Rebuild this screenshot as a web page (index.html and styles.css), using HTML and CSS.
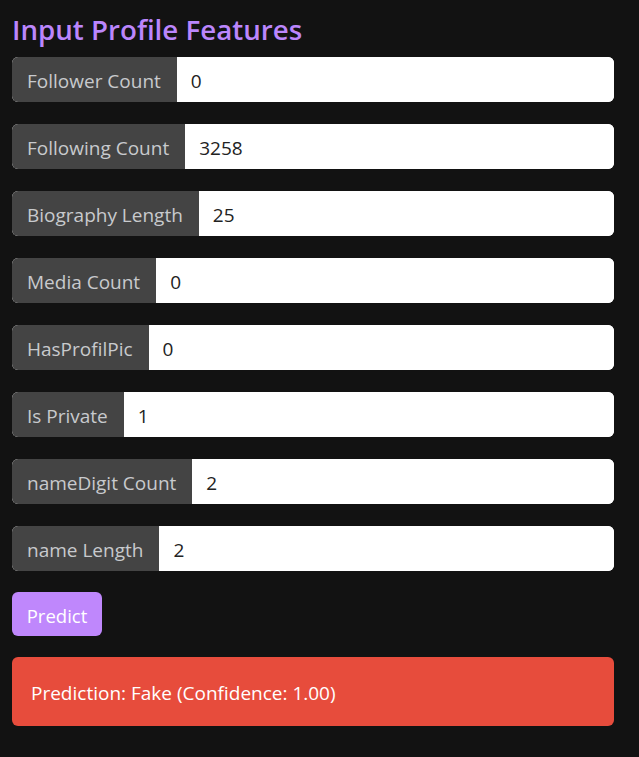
FILE: index.html
```html
<!DOCTYPE html>
<html>
<head>
<meta charset="utf-8">
<link rel="stylesheet" href="styles.css">
</head>
<body>
<div class="container">
  <h2 class="title">Input Profile Features</h2>
  <div class="group"><span class="label">Follower Count</span><input class="field" value="0"></div>
  <div class="group"><span class="label">Following Count</span><input class="field" value="3258"></div>
  <div class="group"><span class="label">Biography Length</span><input class="field" value="25"></div>
  <div class="group"><span class="label">Media Count</span><input class="field" value="0"></div>
  <div class="group"><span class="label">HasProfilPic</span><input class="field" value="0"></div>
  <div class="group"><span class="label">Is Private</span><input class="field" value="1"></div>
  <div class="group"><span class="label">nameDigit Count</span><input class="field" value="2"></div>
  <div class="group"><span class="label">name Length</span><input class="field" value="2"></div>
  <button class="btn">Predict</button>
  <div class="result">Prediction: Fake (Confidence: 1.00)</div>
</div>
</body>
</html>
```
FILE: styles.css
```css
html, body {
  margin: 0;
  background: #121212;
}
body {
  font-family: "Open Sans", "Noto Sans", sans-serif;
}
.container {
  padding: 12px 25px 12px 12px;
}
.title {
  margin: 0 0 11px;
  font-size: 27.7px;
  line-height: 34px;
  font-weight: 600;
  color: #bb86fc;
}
.group {
  display: flex;
  height: 45px;
  margin-bottom: 22px;
  border-radius: 6px;
  overflow: hidden;
  background: #fff;
}
.label {
  display: flex;
  align-items: center;
  padding: 2px 16px 0 15px;
  background: #444;
  color: #c8cacd;
  font-size: 19px;
  white-space: nowrap;
}
.field {
  flex: 1;
  min-width: 0;
  border: 0;
  outline: none;
  padding: 2px 14px 0;
  font-family: inherit;
  font-size: 19px;
  color: #222;
  background: #fff;
}
.btn {
  display: block;
  height: 44px;
  width: 90px;
  margin: -1px 0 21px;
  border: 0;
  border-radius: 6px;
  background: #bf87fc;
  color: #fff;
  font-family: inherit;
  font-size: 18.5px;
  padding: 2px 0 0;
}
.result {
  height: 69px;
  box-sizing: border-box;
  padding: 2px 19px 0;
  display: flex;
  align-items: center;
  background: #e74c3c;
  color: #fff;
  border-radius: 6px;
  font-size: 19px;
}
```
